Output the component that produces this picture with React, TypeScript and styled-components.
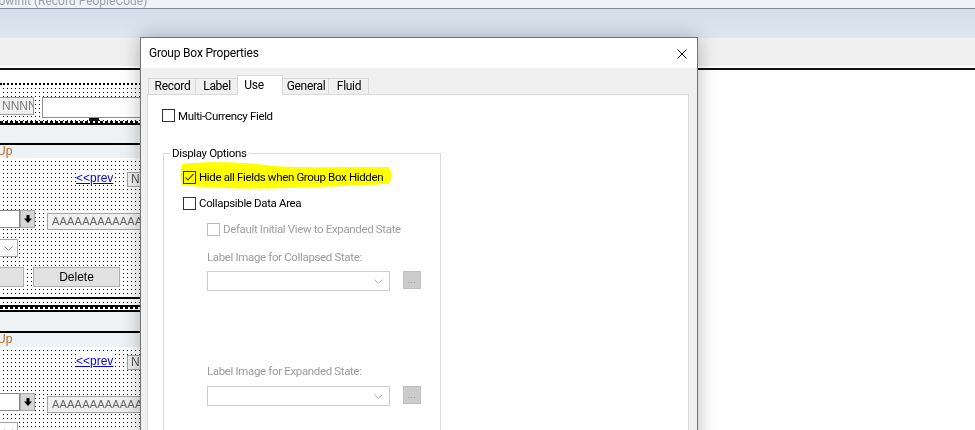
import React from "react";
import styled, { createGlobalStyle } from "styled-components";

const GlobalStyle = createGlobalStyle`
  html, body { margin: 0; padding: 0; background: #ffffff; }
  body { width: 975px; height: 430px; overflow: hidden; }
  *, *::before, *::after { box-sizing: border-box; }
`;

const UI = `"Roboto", "Liberation Sans", Arial, sans-serif`;
const CLASSIC = `"Liberation Sans", Arial, sans-serif`;

type Pos = { $x: number; $y: number };

/* ---------- application frame ---------- */

const Screen = styled.div`
  position: relative;
  width: 975px;
  height: 430px;
  overflow: hidden;
  display: flex;
  flex-direction: column;
  background: #fff;
  font-family: ${UI};
`;

const TitleStrip = styled.div`
  flex: none;
  height: 9px;
  background: #eef1f5;
  border-bottom: 1px solid #808a96;
  overflow: hidden;
  white-space: nowrap;
`;

const TitleText = styled.div`
  margin: -5px 0 0 -9px;
  font-size: 12px;
  line-height: 12px;
  color: #9aa3ad;
`;

const RibbonBand = styled.div`
  flex: none;
  height: 29px;
  background: linear-gradient(#d3deea, #dee6ef);
`;

const Toolbar = styled.div`
  flex: none;
  height: 30px;
  background: #f0f0f0;
  border-bottom: 2px solid #ffffff;
`;

const Workspace = styled.div`
  flex: 1;
  min-height: 0;
  display: flex;
  border-top: 2px solid #111;
`;

const Canvas = styled.div`
  flex: none;
  width: 560px;
  display: flex;
  flex-direction: column;
  background: #fff;
`;

const BlankArea = styled.div`
  flex: 1;
  background: #fff;
`;

/* ---------- page designer canvas ---------- */

const CanvasGap = styled.div<{ $h: number }>`
  flex: none;
  height: ${(p) => p.$h}px;
  background: #fff;
`;

const DotRule = styled.div`
  flex: none;
  height: 2px;
  border-top: 2px dotted #000;
`;

const DashRule = styled.div<{ $h?: number }>`
  flex: none;
  height: ${(p) => p.$h ?? 2}px;
  background-image: linear-gradient(to right, #000 3px, transparent 3px);
  background-size: 5px 2px;
  background-repeat: repeat-x;
`;

const SolidRule = styled.div`
  flex: none;
  height: 2px;
  background: #000;
`;

const ShadeBand = styled.div<{ $h: number }>`
  flex: none;
  height: ${(p) => p.$h}px;
  background: #eff2f4;
`;

const HeaderBand = styled.div<{ $h: number }>`
  flex: none;
  height: ${(p) => p.$h}px;
  background: #eff2f4;
  overflow: hidden;
  white-space: nowrap;
`;

const HeaderText = styled.span`
  display: block;
  margin-left: -3px;
  font: 12px/13px ${CLASSIC};
  color: #b86a24;
`;

const GridBand = styled.div<{ $h?: number }>`
  position: relative;
  flex: ${(p) => (p.$h ? "none" : "1")};
  height: ${(p) => (p.$h ? `${p.$h}px` : "auto")};
  overflow: hidden;
  background-color: #fff;
  background-image: linear-gradient(to right, #fff 3px, transparent 3px),
    linear-gradient(to bottom, #fff 3px, #000 3px);
  background-size: 4px 4px;
`;

const NumField = styled.div<Pos>`
  position: absolute;
  left: ${(p) => p.$x}px;
  top: ${(p) => p.$y}px;
  width: 38px;
  height: 18px;
  padding-left: 5px;
  background: #f0f0f0;
  border: 1px solid #9c9c9c;
  font: 12px/16px ${CLASSIC};
  color: #7a7a7a;
  overflow: hidden;
  white-space: nowrap;
`;

const TextInput = styled.div<Pos>`
  position: absolute;
  left: ${(p) => p.$x}px;
  top: ${(p) => p.$y}px;
  width: 320px;
  height: 21px;
  background: #fff;
  border: 1px solid #8f8f8f;
`;

const SizeHandle = styled.div<Pos>`
  position: absolute;
  left: ${(p) => p.$x}px;
  top: ${(p) => p.$y}px;
  width: 10px;
  height: 3px;
  background: #111;
`;

const PrevLink = styled.a<Pos>`
  position: absolute;
  left: ${(p) => p.$x}px;
  top: ${(p) => p.$y}px;
  font: 12px/14px ${CLASSIC};
  color: #0000ee;
  text-decoration: underline;
  background: #fff;
`;

const NavButton = styled.div<Pos>`
  position: absolute;
  left: ${(p) => p.$x}px;
  top: ${(p) => p.$y}px;
  width: 30px;
  height: 15px;
  padding-left: 3px;
  background: #f0f0f0;
  border: 1px solid #a3a3a3;
  font: 12px/13px ${CLASSIC};
  color: #555;
`;

const DropInput = styled.div<Pos>`
  position: absolute;
  left: ${(p) => p.$x}px;
  top: ${(p) => p.$y}px;
  width: 24px;
  height: 18px;
  background: #fff;
  border: 1px solid #8a8a8a;
`;

const DropButton = styled.div<Pos>`
  position: absolute;
  left: ${(p) => p.$x}px;
  top: ${(p) => p.$y}px;
  width: 15px;
  height: 18px;
  display: flex;
  align-items: center;
  justify-content: center;
  background: #d6d6d6;
  border: 1px solid #a8a8a8;
`;

const AlphaField = styled.div<Pos>`
  position: absolute;
  left: ${(p) => p.$x}px;
  top: ${(p) => p.$y}px;
  width: 320px;
  height: 17px;
  padding-left: 4px;
  background: #f0f0f0;
  border: 1px solid #a3a3a3;
  font: 11px/15px ${CLASSIC};
  letter-spacing: 0.2px;
  color: #666;
  overflow: hidden;
  white-space: nowrap;
`;

const CanvasSelect = styled.div<Pos>`
  position: absolute;
  left: ${(p) => p.$x}px;
  top: ${(p) => p.$y}px;
  width: 24px;
  height: 18px;
  display: flex;
  align-items: center;
  justify-content: flex-end;
  padding-right: 4px;
  background: #fff;
  border: 1px solid #a3a3a3;
`;

const CanvasButton = styled.div<Pos & { $w: number }>`
  position: absolute;
  left: ${(p) => p.$x}px;
  top: ${(p) => p.$y}px;
  width: ${(p) => p.$w}px;
  height: 20px;
  display: flex;
  align-items: center;
  justify-content: center;
  background: #e1e1e1;
  border: 1px solid #adadad;
  font: 12px ${CLASSIC};
  color: #000;
`;

const DownArrow = () => (
  <svg width="8" height="8" viewBox="0 0 8 8">
    <path d="M2.5 0h3v3.5H8L4 8 0 3.5h2.5z" fill="#000" />
  </svg>
);

const SmallChevron = ({ color = "#8c8c8c" }: { color?: string }) => (
  <svg width="9" height="5" viewBox="0 0 9 5">
    <polyline points="0.5,0.5 4.5,4.5 8.5,0.5" fill="none" stroke={color} strokeWidth="1" />
  </svg>
);

const FieldCluster = ({ shift }: { shift: number }) => (
  <>
    <PrevLink $x={76} $y={13 + shift}>&lt;&lt;prev</PrevLink>
    <NavButton $x={127} $y={14 + shift}>N</NavButton>
    <DropInput $x={-4} $y={52 + shift} />
    <DropButton $x={20} $y={52 + shift}>
      <DownArrow />
    </DropButton>
    <AlphaField $x={47} $y={55 + shift}>AAAAAAAAAAAAAAAAAAAAAAAAAAAA</AlphaField>
    <CanvasSelect $x={-6} $y={81 + shift}>
      <SmallChevron />
    </CanvasSelect>
    <CanvasButton $x={-40} $y={109 + shift} $w={64} />
    <CanvasButton $x={33} $y={109 + shift} $w={87}>
      Delete
    </CanvasButton>
  </>
);

/* ---------- dialog ---------- */

const Dialog = styled.div`
  position: absolute;
  left: 140px;
  top: 37px;
  width: 558px;
  height: 420px;
  display: flex;
  flex-direction: column;
  background: #f0f0f0;
  border: 1px solid #737373;
  box-shadow: 0 0 18px rgba(0, 0, 0, 0.28);
  font-family: ${UI};
  font-size: 11.5px;
  letter-spacing: -0.35px;
  color: #000;
`;

const DialogTitleBar = styled.div`
  flex: none;
  height: 30px;
  display: flex;
  align-items: center;
  justify-content: space-between;
  padding: 0 10px 0 8px;
  background: #fff;
`;

const DialogTitle = styled.span`
  font-size: 12px;
  letter-spacing: -0.2px;
`;

const CloseGlyph = styled.span`
  display: flex;
  width: 10px;
  height: 10px;
  margin-top: 1px;
`;

const DialogBody = styled.div`
  flex: 1;
  display: flex;
  flex-direction: column;
  padding: 7px 8px 0 6px;
`;

const TabRow = styled.div`
  flex: none;
  height: 19px;
  display: flex;
  align-items: flex-end;
  padding-left: 1px;
  position: relative;
  z-index: 1;
`;

const Tab = styled.div<{ $w: number; $active?: boolean }>`
  width: ${(p) => p.$w}px;
  height: ${(p) => (p.$active ? 20 : 16)}px;
  margin-bottom: ${(p) => (p.$active ? -1 : 0)}px;
  padding: ${(p) => (p.$active ? "1px 12px 0 0" : "0 0 0 1px")};
  text-align: center;
  font-size: 12px;
  letter-spacing: -0.3px;
  background: ${(p) => (p.$active ? "#fff" : "#f0f0f0")};
  border: 1px solid #d9d9d9;
  border-bottom: none;
  line-height: ${(p) => (p.$active ? 16 : 15)}px;
  white-space: nowrap;
  position: relative;
  z-index: ${(p) => (p.$active ? 2 : 1)};
  & + & {
    margin-left: -1px;
  }
`;

const TabPanel = styled.div`
  flex: 1;
  display: flex;
  flex-direction: column;
  align-items: flex-start;
  padding: 14px 0 0 14px;
  background: #fff;
  border: 1px solid #d9d9d9;
`;

const CheckRow = styled.label<{ $h?: number; $disabled?: boolean }>`
  display: flex;
  align-items: center;
  gap: 3px;
  height: ${(p) => p.$h ?? 13}px;
  line-height: 14px;
  color: ${(p) => (p.$disabled ? "#a0a0a0" : "#000")};
  white-space: nowrap;
`;

const Box = styled.span<{ $disabled?: boolean }>`
  flex: none;
  width: 13px;
  height: 13px;
  display: flex;
  background: #fff;
  border: 1px solid ${(p) => (p.$disabled ? "#bcbcbc" : "#333")};
`;

const Checkbox = ({ checked, disabled }: { checked?: boolean; disabled?: boolean }) => (
  <Box $disabled={disabled}>
    {checked && (
      <svg width="11" height="11" viewBox="0 0 11 11">
        <polyline points="1.5,5.5 4,8 9.5,2" fill="none" stroke="#555" strokeWidth="1.2" />
      </svg>
    )}
  </Box>
);

const GroupBox = styled.fieldset`
  flex: 1;
  width: 278px;
  margin: 24px 0 0 1px;
  padding: 0;
  border: 1px solid #dcdcdc;
  min-width: 0;
`;

const GroupLegend = styled.legend`
  margin-left: 6px;
  padding: 0 2px;
  line-height: 14px;
`;

const GroupContent = styled.div`
  display: flex;
  flex-direction: column;
  padding: 4px 0 0 19px;
`;

const Indented = styled.div`
  display: flex;
  flex-direction: column;
  padding-left: 24px;
`;

const FieldCaption = styled.div<{ $gap: number }>`
  margin-top: ${(p) => p.$gap}px;
  line-height: 14px;
  color: #9b9b9b;
  white-space: nowrap;
`;

const SelectRow = styled.div<{ $gap: number }>`
  display: flex;
  align-items: flex-start;
  gap: 13px;
  margin-top: ${(p) => p.$gap}px;
`;

const ImageSelect = styled.div`
  width: 183px;
  height: 20px;
  display: flex;
  align-items: center;
  justify-content: flex-end;
  padding-right: 6px;
  background: #fff;
  border: 1px solid #cccccc;
`;

const BrowseButton = styled.div`
  width: 18px;
  height: 18px;
  display: flex;
  align-items: flex-end;
  justify-content: center;
  padding-bottom: 3px;
  background: #cccccc;
  border: 1px solid #bfbfbf;
  color: #858585;
  font-size: 9px;
  line-height: 9px;
  letter-spacing: 0.5px;
`;

/* annotation highlight drawn over the dialog */
const Highlight = styled.svg`
  position: absolute;
  left: 178px;
  top: 158px;
  width: 216px;
  height: 34px;
  mix-blend-mode: multiply;
  pointer-events: none;
`;

export default function App() {
  return (
    <>
      <GlobalStyle />
      <Screen>
        <TitleStrip>
          <TitleText>RowInit (Record PeopleCode)</TitleText>
        </TitleStrip>
        <RibbonBand />
        <Toolbar />
        <Workspace>
          <Canvas>
            <CanvasGap $h={13} />
            <DotRule />
            <GridBand $h={36}>
              <NumField $x={-4} $y={12}>NNNNN</NumField>
              <TextInput $x={42} $y={12} />
              <SizeHandle $x={89} $y={33} />
            </GridBand>
            <DashRule />
            <SolidRule />
            <ShadeBand $h={18} />
            <SolidRule />
            <HeaderBand $h={13}>
              <HeaderText>Up</HeaderText>
            </HeaderBand>
            <GridBand $h={139}>
              <FieldCluster shift={0} />
            </GridBand>
            <SolidRule />
            <GridBand $h={6} />
            <SolidRule />
            <DashRule $h={3} />
            <SolidRule />
            <ShadeBand $h={19} />
            <SolidRule />
            <HeaderBand $h={14}>
              <HeaderText>Up</HeaderText>
            </HeaderBand>
            <GridBand>
              <FieldCluster shift={-6} />
            </GridBand>
          </Canvas>
          <BlankArea />
        </Workspace>

        <Dialog>
          <DialogTitleBar>
            <DialogTitle>Group Box Properties</DialogTitle>
            <CloseGlyph>
              <svg width="10" height="10" viewBox="0 0 10 10">
                <path d="M0.5 0.5L9.5 9.5M9.5 0.5L0.5 9.5" stroke="#111" strokeWidth="1" />
              </svg>
            </CloseGlyph>
          </DialogTitleBar>
          <DialogBody>
            <TabRow>
              <Tab $w={48}>Record</Tab>
              <Tab $w={43}>Label</Tab>
              <Tab $w={46} $active>
                Use
              </Tab>
              <Tab $w={47}>General</Tab>
              <Tab $w={41}>Fluid</Tab>
            </TabRow>
            <TabPanel>
              <CheckRow>
                <Checkbox />
                Multi-Currency Field
              </CheckRow>
              <GroupBox>
                <GroupLegend>Display Options</GroupLegend>
                <GroupContent>
                  <CheckRow $h={26}>
                    <Checkbox checked />
                    Hide all Fields when Group Box Hidden
                  </CheckRow>
                  <CheckRow $h={26}>
                    <Checkbox />
                    Collapsible Data Area
                  </CheckRow>
                  <Indented>
                    <CheckRow $h={26} $disabled>
                      <Checkbox disabled />
                      Default Initial View to Expanded State
                    </CheckRow>
                    <FieldCaption $gap={8}>Label Image for Collapsed State:</FieldCaption>
                    <SelectRow $gap={7}>
                      <ImageSelect>
                        <SmallChevron color="#b5b5b5" />
                      </ImageSelect>
                      <BrowseButton>...</BrowseButton>
                    </SelectRow>
                    <FieldCaption $gap={73}>Label Image for Expanded State:</FieldCaption>
                    <SelectRow $gap={8}>
                      <ImageSelect>
                        <SmallChevron color="#b5b5b5" />
                      </ImageSelect>
                      <BrowseButton>...</BrowseButton>
                    </SelectRow>
                  </Indented>
                </GroupContent>
              </GroupBox>
            </TabPanel>
          </DialogBody>
        </Dialog>

        <Highlight viewBox="178 158 216 34">
          <path
            d="M182 164 C205 161 245 162 265 165 C285 168 320 167 389 167 Q394 175 389 184 C340 186 270 190 225 188 C200 187 188 186 182 185 Q179 175 182 164 Z"
            fill="#ffff00"
          />
        </Highlight>
      </Screen>
    </>
  );
}
